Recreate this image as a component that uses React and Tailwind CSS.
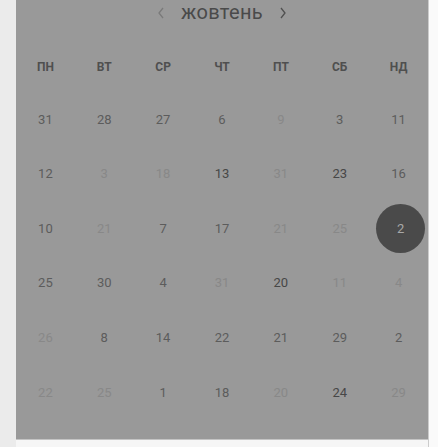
import React from "react";

const N = "text-[#5c5c5c]";
const D = "text-[#474747]";
const F = "text-[#888888]";

const rows = [
  [["31", N], ["28", N], ["27", N], ["6", N], ["9", F], ["3", N], ["11", N]],
  [["12", N], ["3", F], ["18", F], ["13", D], ["31", F], ["23", D], ["16", N]],
  [["10", N], ["21", F], ["7", N], ["17", N], ["21", F], ["25", F], ["2", "sel"]],
  [["25", N], ["30", N], ["4", N], ["31", F], ["20", D], ["11", F], ["4", F]],
  [["26", F], ["8", N], ["14", N], ["22", N], ["21", N], ["29", N], ["2", N]],
  [["22", F], ["25", F], ["1", N], ["18", N], ["20", F], ["24", D], ["29", F]],
];

const days = ["ПН", "ВТ", "СР", "ЧТ", "ПТ", "СБ", "НД"];

export default function App() {
  return (
    <div className="w-[438px] h-[447px] bg-[#ebebeb] flex overflow-hidden font-['Roboto','Liberation_Sans',sans-serif]">
      <div className="w-[16px] shrink-0" />
      <div className="w-[412px] shrink-0 flex flex-col">
        <div className="h-[439px] bg-[#999999] flex flex-col">
          <div className="h-[26px] pt-[1px] flex items-start justify-center gap-[16px]">
            <svg width="8" height="12" viewBox="0 0 8 12" className="mt-[6px]">
              <path d="M6 1 L2 6 L6 11" fill="none" stroke="#7a7a7a" strokeWidth="1.3" />
            </svg>
            <span className="text-[20px] leading-[22px] tracking-[0.3px] text-[#4a4a4a]">жовтень</span>
            <svg width="8" height="12" viewBox="0 0 8 12" className="mt-[6px]">
              <path d="M2 1 L6 6 L2 11" fill="none" stroke="#505050" strokeWidth="1.3" />
            </svg>
          </div>
          <div className="grid grid-cols-7 mt-[30px] h-[22px] items-center">
            {days.map((d) => (
              <div key={d} className="text-center text-[12px] font-bold text-[#4f4f4f]">
                {d}
              </div>
            ))}
          </div>
          <div className="mt-[14px] flex flex-col">
            {rows.map((r, i) => (
              <div key={i} className="grid grid-cols-7 h-[54.6px] items-center">
                {r.map(([t, c], j) =>
                  c === "sel" ? (
                    <div key={j} className="flex justify-center">
                      <div className="w-[49px] h-[49px] ml-[4px] rounded-full bg-[#4a4a4a] flex items-center justify-center text-[13px] text-[#a8a8a8]">
                        {t}
                      </div>
                    </div>
                  ) : (
                    <div key={j} className={`text-center text-[13px] ${c}`}>
                      {t}
                    </div>
                  )
                )}
              </div>
            ))}
          </div>
        </div>
        <div className="flex-1 bg-[#f6f6f6] border-t border-[#c4c4c4]" />
      </div>
      <div className="flex-1 bg-[#fafafa] border-l border-[#cccccc]" />
    </div>
  );
}
